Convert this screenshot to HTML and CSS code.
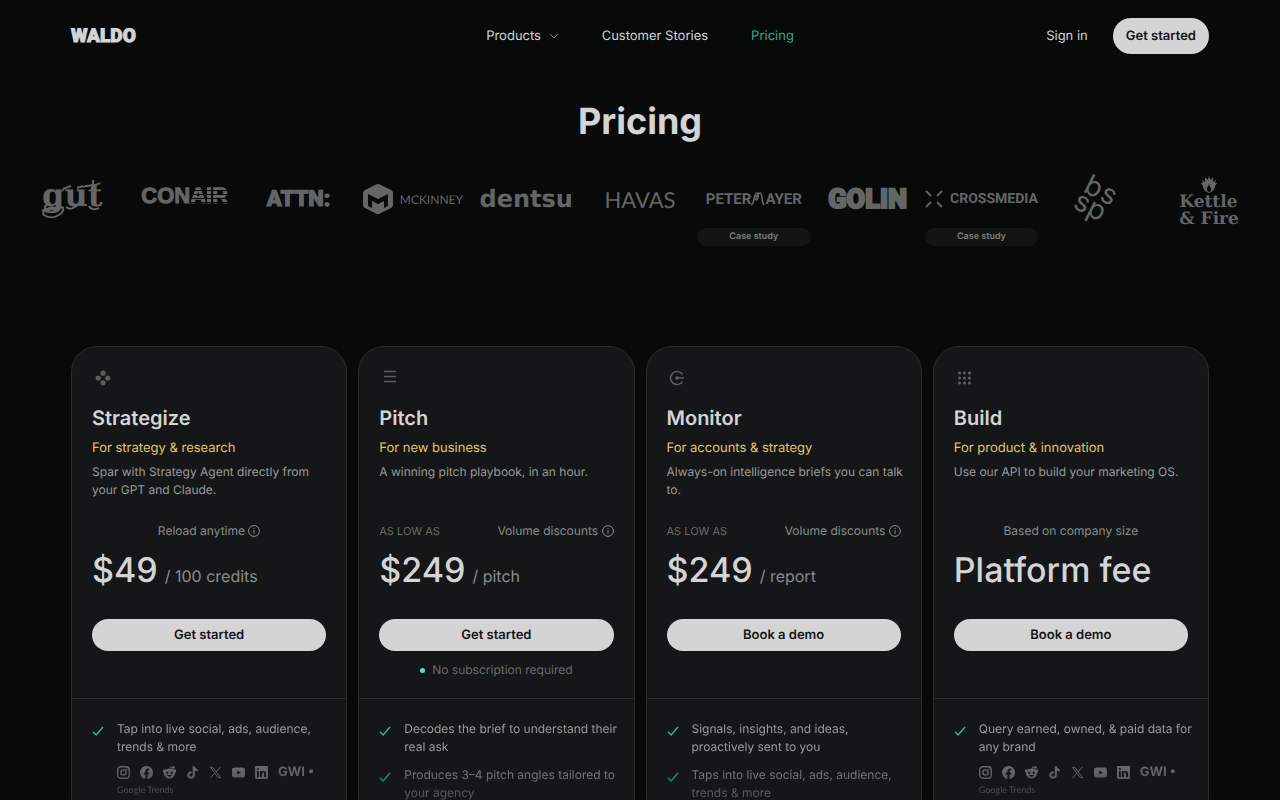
FILE: index.html
```html
<!DOCTYPE html>
<html lang="en">
<head>
    <meta charset="UTF-8">
    <meta name="viewport" content="width=device-width, initial-scale=1.0">
    <title>Pricing - Waldo</title>
    <link rel="stylesheet" href="styles.css">
</head>
<body>
    <!-- Shared icons -->
    <svg class="sprite" aria-hidden="true">
        <symbol id="info" viewBox="0 0 12 12">
            <circle cx="6" cy="6" r="5.4" fill="none" stroke="currentColor"/>
            <path d="M6 5.2v3.6M6 3v1.1" stroke="currentColor"/>
        </symbol>
        <symbol id="check" viewBox="0 0 12 12">
            <path d="M1 6.8 4.2 10 11 2" fill="none" stroke="currentColor" stroke-width="1.4"/>
        </symbol>
        <symbol id="instagram" viewBox="0 0 13 13">
            <rect x=".7" y=".7" width="11.6" height="11.6" rx="3.2" fill="none" stroke="currentColor" stroke-width="1.4"/>
            <circle cx="6.5" cy="6.5" r="2.6" fill="none" stroke="currentColor" stroke-width="1.4"/>
            <circle cx="9.8" cy="3.2" r=".8" fill="currentColor"/>
        </symbol>
        <symbol id="facebook" viewBox="0 0 13 13">
            <path fill="currentColor" d="M13 6.5A6.5 6.5 0 1 0 5.4 12.9V8.4H3.8V6.5h1.6V5.1c0-1.7 1-2.6 2.5-2.6.7 0 1.4.1 1.4.1v1.6h-.8c-.8 0-1 .5-1 1v1.3h1.8L9 8.4H7.5v4.5A6.5 6.5 0 0 0 13 6.5z"/>
        </symbol>
        <symbol id="reddit" viewBox="0 0 13 13">
            <path fill="currentColor" fill-rule="evenodd" d="M6.5 2.8 7.3.5l2 .4a1.300 1.300 0 1 1-.1.900l-1.300-.3-.4 1.300c1.300.1 2.500.5 3.300 1a1.500 1.500 0 1 1 1.400 2.500c.1 3.400-2.500 6.200-5.700 6.200S.7 10 .8 6.300a1.500 1.500 0 1 1 1.400-2.500c1-.6 2.500-1 4.300-1zM4.300 5.600a1.100 1.200 0 1 0 0 2.400 1.100 1.200 0 0 0 0-2.400zm4.400 0a1.100 1.200 0 1 0 0 2.400 1.100 1.200 0 0 0 0-2.400zM3.900 9c1.200 2.200 4 2.200 5.200 0z"/>
        </symbol>
        <symbol id="tiktok" viewBox="0 0 13 13">
            <path fill="currentColor" d="M6.7.3h2.200c.1 1.700 1.200 2.700 2.800 2.900v2.200c-1.100 0-2-.3-2.800-.9v4.200c0 2.500-1.900 4.100-4 4.100S1.200 11.100 1.200 9s1.800-4 4.400-3.800v2.300c-1.200-.2-2.200.5-2.200 1.500s.7 1.600 1.600 1.600 1.700-.6 1.700-1.800z"/>
        </symbol>
        <symbol id="xcom" viewBox="0 0 13 13">
            <path fill="none" stroke="currentColor" d="M1.500 1.300h2.300l7.700 10.400H9.200zM11.400 1 7.200 5.800M5.600 7.500 1.500 12"/>
        </symbol>
        <symbol id="youtube" viewBox="0 0 13 13">
            <path fill="currentColor" fill-rule="evenodd" d="M2.500 1.600h8A2.500 2.500 0 0 1 13 4.100v4.800a2.500 2.500 0 0 1-2.500 2.500h-8A2.500 2.500 0 0 1 0 8.900V4.100a2.500 2.500 0 0 1 2.500-2.500zm2.700 2.900v4l3.600-2z"/>
        </symbol>
        <symbol id="linkedin" viewBox="0 0 13 13">
            <path fill="currentColor" fill-rule="evenodd" d="M1 0h11a1 1 0 0 1 1 1v11a1 1 0 0 1-1 1H1a1 1 0 0 1-1-1V1a1 1 0 0 1 1-1zm1 5v6h1.800V5zm.9-3a1 1 0 1 0 0 2.100 1 1 0 0 0 0-2.100zM5 5v6h1.900V8c0-1.800 2.200-1.900 2.200 0v3H11V7.300c0-2.800-3-3-4.100-1.400V5z"/>
        </symbol>
    </svg>

    <header class="header">
        <a class="brand" href="#">WALDO</a>
        <nav class="nav">
            <a href="#">Products
                <svg class="chevron" viewBox="0 0 10 6"><path d="M1 1l4 4 4-4" fill="none" stroke="currentColor"/></svg>
            </a>
            <a href="#">Customer Stories</a>
            <a class="active" href="#">Pricing</a>
        </nav>
        <div class="account">
            <a href="#">Sign in</a>
            <button class="btn btn-small">Get started</button>
        </div>
    </header>

    <main>
        <h1>Pricing</h1>

        <section class="logos">
            <div class="logo">
                <div class="mark">
                    <svg width="64" height="44" viewBox="0 0 64 44">
                        <text class="gut" x="3" y="29">gut</text>
                        <path d="M3 34c5-5 12 1 18-3 5-3 4 4-1 7s-11 3-15 0 5-9 12-7M10 27c-6 2-5 6 1 6M44 10c5-3 11 0 17-4M54 3v9M24 12l8-3M38 11l6-2M60 31c-3 2-8 2-10-2M27 30c5 4 9 0 13-3" fill="none" stroke="currentColor" stroke-width="2"/>
                    </svg>
                </div>
            </div>
            <div class="logo"><div class="mark conair">CON<span>AIR</span></div></div>
            <div class="logo"><div class="mark attn">ATTN:</div></div>
            <div class="logo">
                <div class="mark mckinney">
                    <svg width="32" height="32" viewBox="0 0 32 32">
                        <path fill="currentColor" fill-rule="evenodd" d="M14 1.500q2-1.200 4 0l11 5.500q2 1 2 3v12q0 2-2 3l-11 5.500q-2 1.200-4 0L3 25q-2-1-2-3V10q0-2 2-3zM6 11v12l4 2v-7l6 3 6-3v7l4-2V11l-10 5z"/>
                    </svg>
                    <span>MCKINNEY</span>
                </div>
            </div>
            <div class="logo"><div class="mark dentsu">dentsu</div></div>
            <div class="logo"><div class="mark havas">HAVAS</div></div>
            <div class="logo">
                <div class="mark peter">PETER<svg width="14" height="16" viewBox="0 0 14 16"><path d="M0 14C4 14 2 2 6 2c3 0 0 7 0 7s0-7 3-7 1 9 4 12M6 9C2 9 4 4 6 5" fill="none" stroke="currentColor" stroke-width="1.600"/></svg>AYER</div>
                <a class="case" href="#">Case study</a>
            </div>
            <div class="logo"><div class="mark golin">GOLIN</div></div>
            <div class="logo">
                <div class="mark cross">
                    <svg width="18" height="18" viewBox="0 0 18 18"><path d="M1 1l5 5M17 1l-5 5M1 17l5-5M17 17l-5-5" stroke="currentColor" stroke-width="1.800"/></svg>
                    <span>CROSSMEDIA</span>
                </div>
                <a class="case" href="#">Case study</a>
            </div>
            <div class="logo">
                <div class="mark">
                    <svg class="bssp" width="60" height="60" viewBox="-30 -30 60 60">
                        <g transform="rotate(27)">
                            <text x="-15" y="-1">b</text><text x="3" y="-1">s</text>
                            <text x="-17" y="18">s</text><text x="-2" y="18">p</text>
                        </g>
                    </svg>
                </div>
            </div>
            <div class="logo">
                <div class="mark kettle">
                    <svg width="16" height="18" viewBox="0 0 16 18"><path fill="currentColor" fill-rule="evenodd" d="M8 0q0 3 2 5l1-3q2 2 1 5l3-2-1 3h2q-1 2-2 3 0 5-6 7-6-2-6-7Q1 10 0 8h2L1 5l3 2Q3 4 5 2l1 3q2-2 2-5zm0 8q0 3-2 5-1 3 2 4 3-1 2-4-2-2-2-5z"/></svg>
                    <span>Kettle<br>&amp; Fire</span>
                </div>
            </div>
        </section>

        <section class="plans">
            <article class="plan">
                <div class="plan-top">
                    <svg class="plan-icon" viewBox="0 0 20 20"><g fill="currentColor"><circle cx="11" cy="5.200" r="2.600"/><circle cx="6.200" cy="10" r="2.600"/><circle cx="15.800" cy="10" r="2.600"/><circle cx="11" cy="14.800" r="2.600"/></g></svg>
                    <h2>Strategize</h2>
                    <p class="audience">For strategy &amp; research</p>
                    <p class="desc">Spar with Strategy Agent directly from your GPT and Claude.</p>
                    <div class="terms centered"><span>Reload anytime <svg class="info"><use href="#info"/></svg></span></div>
                    <p class="price">$49 <small>/ 100 credits</small></p>
                    <button class="btn">Get started</button>
                    <p class="note"></p>
                </div>
                <ul class="features">
                    <li><svg class="check"><use href="#check"/></svg>
                        <div>Tap into live social, ads, audience, trends &amp; more
                            <div class="sources">
                                <svg><use href="#instagram"/></svg>
                                <svg><use href="#facebook"/></svg>
                                <svg><use href="#reddit"/></svg>
                                <svg><use href="#tiktok"/></svg>
                                <svg><use href="#xcom"/></svg>
                                <svg><use href="#youtube"/></svg>
                                <svg><use href="#linkedin"/></svg>
                                <b>GWI •</b>
                            </div>
                            <div class="trends">Google Trends</div>
                        </div>
                    </li>
                </ul>
            </article>

            <article class="plan">
                <div class="plan-top">
                    <svg class="plan-icon" viewBox="0 0 20 20"><path d="M5 3.500h12M5 8.500h12M5 13.500h12" stroke="currentColor" stroke-width="1.600"/></svg>
                    <h2>Pitch</h2>
                    <p class="audience">For new business</p>
                    <p class="desc">A winning pitch playbook, in an hour.</p>
                    <div class="terms"><span class="low">AS LOW AS</span><span>Volume discounts <svg class="info"><use href="#info"/></svg></span></div>
                    <p class="price">$249 <small>/ pitch</small></p>
                    <button class="btn">Get started</button>
                    <p class="note"><span class="dot"></span>No subscription required</p>
                </div>
                <ul class="features">
                    <li><svg class="check"><use href="#check"/></svg><div>Decodes the brief to understand their real ask</div></li>
                    <li><svg class="check"><use href="#check"/></svg><div>Produces 3–4 pitch angles tailored to your agency</div></li>
                </ul>
            </article>

            <article class="plan">
                <div class="plan-top">
                    <svg class="plan-icon" viewBox="0 0 20 20"><path d="M15.500 6.200a6.600 6.600 0 1 0 0 7.600M10 10h7" fill="none" stroke="currentColor" stroke-width="1.500"/><circle cx="10" cy="10" r="1.800" fill="currentColor"/></svg>
                    <h2>Monitor</h2>
                    <p class="audience">For accounts &amp; strategy</p>
                    <p class="desc">Always-on intelligence briefs you can talk to.</p>
                    <div class="terms"><span class="low">AS LOW AS</span><span>Volume discounts <svg class="info"><use href="#info"/></svg></span></div>
                    <p class="price">$249 <small>/ report</small></p>
                    <button class="btn">Book a demo</button>
                    <p class="note"></p>
                </div>
                <ul class="features">
                    <li><svg class="check"><use href="#check"/></svg><div>Signals, insights, and ideas, proactively sent to you</div></li>
                    <li><svg class="check"><use href="#check"/></svg><div>Taps into live social, ads, audience, trends &amp; more</div></li>
                </ul>
            </article>

            <article class="plan">
                <div class="plan-top">
                    <svg class="plan-icon" viewBox="0 0 20 20"><path d="M5.500 5h0M10.500 5h0M15.500 5h0M5.500 10h0M10.500 10h0M15.500 10h0M5.500 15h0M10.500 15h0M15.500 15h0" stroke="currentColor" stroke-width="3.200" stroke-linecap="round"/></svg>
                    <h2>Build</h2>
                    <p class="audience">For product &amp; innovation</p>
                    <p class="desc">Use our API to build your marketing OS.</p>
                    <div class="terms centered"><span>Based on company size</span></div>
                    <p class="price">Platform fee</p>
                    <button class="btn">Book a demo</button>
                    <p class="note"></p>
                </div>
                <ul class="features">
                    <li><svg class="check"><use href="#check"/></svg>
                        <div>Query earned, owned, &amp; paid data for any brand
                            <div class="sources">
                                <svg><use href="#instagram"/></svg>
                                <svg><use href="#facebook"/></svg>
                                <svg><use href="#reddit"/></svg>
                                <svg><use href="#tiktok"/></svg>
                                <svg><use href="#xcom"/></svg>
                                <svg><use href="#youtube"/></svg>
                                <svg><use href="#linkedin"/></svg>
                                <b>GWI •</b>
                            </div>
                            <div class="trends">Google Trends</div>
                        </div>
                    </li>
                </ul>
            </article>
        </section>
    </main>
</body>
</html>
```
FILE: styles.css
```css
/* Reset */
* {
    box-sizing: border-box;
}

body, h1, h2, p, ul {
    margin: 0;
    padding: 0;
}

body {
    background-color: #070a09;
    color: #d4d4d4;
    font-family: Inter, "Liberation Sans", sans-serif;
    font-size: 13px;
    line-height: 18px;
    text-rendering: geometricPrecision;
}

a {
    color: inherit;
    text-decoration: none;
}

.sprite {
    display: none;
}

/* Header */
.header {
    display: grid;
    grid-template-columns: 1fr auto 1fr;
    align-items: center;
    padding: 18px 71px 0;
}

.brand {
    font-family: Roboto, sans-serif;
    font-size: 19px;
    font-weight: 900;
    -webkit-text-stroke: 1px currentColor;
}

.nav {
    display: flex;
    gap: 43px;
}

.nav .active {
    color: #2fa898;
}

.chevron {
    width: 10px;
    height: 6px;
    margin-left: 4px;
    vertical-align: middle;
    color: #8a8a8a;
}

.account {
    display: flex;
    justify-content: flex-end;
    align-items: center;
    gap: 25px;
}

.btn {
    width: 100%;
    height: 32px;
    border: none;
    border-radius: 18px;
    background-color: #d4d4d4;
    color: #141516;
    font-family: inherit;
    font-size: 13px;
    font-weight: 600;
    text-rendering: inherit;
    cursor: pointer;
}

.btn:hover {
    background-color: #fff;
}

.btn-small {
    width: auto;
    height: 36px;
    padding: 0 13px;
}

h1 {
    margin-top: 45px;
    font-size: 36px;
    line-height: 44px;
    text-align: center;
}

/* Customer logos */
.logos {
    display: grid;
    grid-template-columns: repeat(11, minmax(0, 1fr));
    padding: 0 14px;
    margin-top: 31px;
    height: 72px;
    color: #646666;
}

.logo {
    display: flex;
    flex-direction: column;
    gap: 4px;
}

.mark {
    display: flex;
    justify-content: center;
    align-items: center;
    height: 50px;
    white-space: nowrap;
}

.mark svg {
    flex: none;
}

.case {
    height: 18px;
    border-radius: 9px;
    background-color: #121514;
    color: #7c7e7e;
    font-size: 9px;
    font-weight: 600;
    text-align: center;
}

.gut {
    fill: currentColor;
    font: bold 32px "DejaVu Serif", serif;
}

.conair {
    height: 44px;
    font: bold 22px "Liberation Sans", sans-serif;
    -webkit-text-stroke: 1px currentColor;
}

.conair span {
    background: repeating-linear-gradient(#646666 0 3px, #070a09 3px 4px);
    background-clip: text;
    -webkit-background-clip: text;
    color: transparent;
}

.attn {
    font: 900 22px Roboto, sans-serif;
    -webkit-text-stroke: 1px currentColor;
}

.mckinney {
    gap: 6px;
    font: 12px Lato, sans-serif;
}

.dentsu {
    font: bold 24px "DejaVu Sans", sans-serif;
}

.havas {
    font: 22px Lato, sans-serif;
}

.peter {
    font: bold 15px Roboto, sans-serif;
}

.golin {
    font: 900 27px Roboto, sans-serif;
    -webkit-text-stroke: 2px currentColor;
}

.cross {
    gap: 7px;
    font: bold 14px Roboto, sans-serif;
}

.bssp text {
    fill: currentColor;
    font: 28px Inter, sans-serif;
}

.kettle {
    flex-direction: column;
    gap: 1px;
    height: 54px;
    font: bold 17px/17px "DejaVu Serif", serif;
}

/* Plans */
.plans {
    display: grid;
    grid-template-columns: repeat(4, 1fr);
    gap: 11px;
    margin-top: 100px;
    padding: 0 71px;
}

.plan {
    border: 1px solid #2b2d2c;
    border-radius: 26px;
    background-color: #141617;
}

.plan-top {
    display: flex;
    flex-direction: column;
    padding: 21px 20px 19px;
    border-bottom: 1px solid #2b2d2c;
}

.plan-icon {
    width: 20px;
    height: 20px;
    color: #5c5e5e;
}

h2 {
    margin-top: 16px;
    font-size: 20px;
    font-weight: 600;
    line-height: 28px;
}

.audience {
    margin-top: 7px;
    color: #e3c766;
}

.desc {
    min-height: 36px;
    margin-top: 6px;
    margin-right: -6px;
    color: #9a9b9b;
    font-size: 12px;
}

.terms {
    display: flex;
    justify-content: space-between;
    margin-top: 23px;
    color: #8c8d8d;
    font-size: 12px;
}

.terms.centered {
    justify-content: center;
}

.low {
    color: #6a6b6b;
    font-size: 11px;
}

.info {
    width: 12px;
    height: 12px;
    vertical-align: -2px;
}

.price {
    display: flex;
    align-items: baseline;
    gap: 7px;
    height: 44px;
    margin-top: 9px;
    font-size: 34px;
    font-weight: 500;
    line-height: 44px;
}

.price small {
    color: #8c8d8d;
    font-size: 16px;
    font-weight: 400;
}

.plan .btn {
    margin-top: 26px;
}

.note {
    display: flex;
    justify-content: center;
    align-items: center;
    gap: 7px;
    height: 18px;
    margin-top: 10px;
    color: #6a6b6b;
    font-size: 12px;
}

.dot {
    width: 5px;
    height: 5px;
    border-radius: 50%;
    background-color: #6fd3cb;
}

/* Features fade out towards the bottom */
.features {
    display: flex;
    flex-direction: column;
    gap: 10px;
    padding: 21px 10px 21px 20px;
    list-style: none;
    color: #9a9b9b;
    font-size: 12px;
    mask-image: linear-gradient(#000 50px, transparent 140px);
}

.features li {
    display: grid;
    grid-template-columns: 12px 1fr;
    gap: 13px;
}

.check {
    width: 12px;
    height: 12px;
    margin-top: 5px;
    color: #2fb8a6;
}

.sources {
    display: flex;
    align-items: center;
    gap: 10px;
    height: 14px;
    margin-top: 9px;
    color: #7c7e7e;
}

.sources svg {
    width: 13px;
    height: 13px;
}

.sources b {
    font-size: 13px;
    white-space: nowrap;
}

.trends {
    margin-top: 2px;
    color: #7c7e7e;
    font: 9px/18px Lato, sans-serif;
}
```
